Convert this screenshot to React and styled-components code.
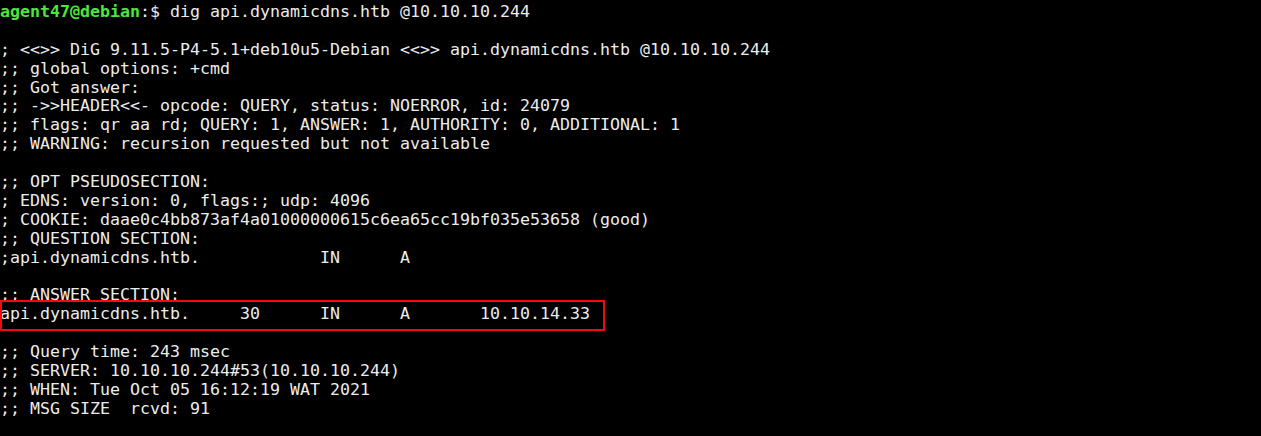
import React from 'react'
import styled, { createGlobalStyle } from 'styled-components'

const GlobalStyle = createGlobalStyle`
    html, body{
        margin:0;
        padding:0;
        background-color:#000;
    }
`

const lines = [
    '; <<>> DiG 9.11.5-P4-5.1+deb10u5-Debian <<>> api.dynamicdns.htb @10.10.10.244',
    ';; global options: +cmd',
    ';; Got answer:',
    ';; ->>HEADER<<- opcode: QUERY, status: NOERROR, id: 24079',
    ';; flags: qr aa rd; QUERY: 1, ANSWER: 1, AUTHORITY: 0, ADDITIONAL: 1',
    ';; WARNING: recursion requested but not available',
    '',
    ';; OPT PSEUDOSECTION:',
    '; EDNS: version: 0, flags:; udp: 4096',
    '; COOKIE: daae0c4bb873af4a01000000615c6ea65cc19bf035e53658 (good)',
    ';; QUESTION SECTION:',
    ';api.dynamicdns.htb.            IN      A',
    '',
    ';; ANSWER SECTION:',
]

const footer = [
    '',
    ';; Query time: 243 msec',
    ';; SERVER: 10.10.10.244#53(10.10.10.244)',
    ';; WHEN: Tue Oct 05 16:12:19 WAT 2021',
    ';; MSG SIZE  rcvd: 91',
]

const App = () => {
    return (
        <>
            <GlobalStyle />
            <Terminal>
                <Line>
                    <User>agent47@debian</User>:$ dig api.dynamicdns.htb @10.10.10.244
                </Line>
                <Line>{' '}</Line>
                {lines.map((l, i) => (
                    <Line key={'a' + i}>{l || ' '}</Line>
                ))}
                <Highlight>api.dynamicdns.htb.     30      IN      A       10.10.14.33</Highlight>
                {footer.map((l, i) => (
                    <Line key={'b' + i}>{l || ' '}</Line>
                ))}
            </Terminal>
        </>
    )
}

const Terminal = styled.div`
    width:1261px;
    height:436px;
    box-sizing:border-box;
    padding:3px 0 0 0;
    background-color:#000;
    color:#ececec;
    font-family:"DejaVu Sans Mono", monospace;
    font-size:16.61px;
    line-height:18.9px;
    overflow:hidden;
`

const Line = styled.div`
    white-space:pre;
    height:18.9px;
`

const User = styled.span`
    color:#4fe63c;
    font-weight:bold;
`

const Highlight = styled(Line)`
    position:relative;
    &::after{
        content:'';
        position:absolute;
        left:0;
        top:-5px;
        width:605px;
        height:31px;
        box-sizing:border-box;
        border:2px solid #f50a0a;
    }
`

export default App
